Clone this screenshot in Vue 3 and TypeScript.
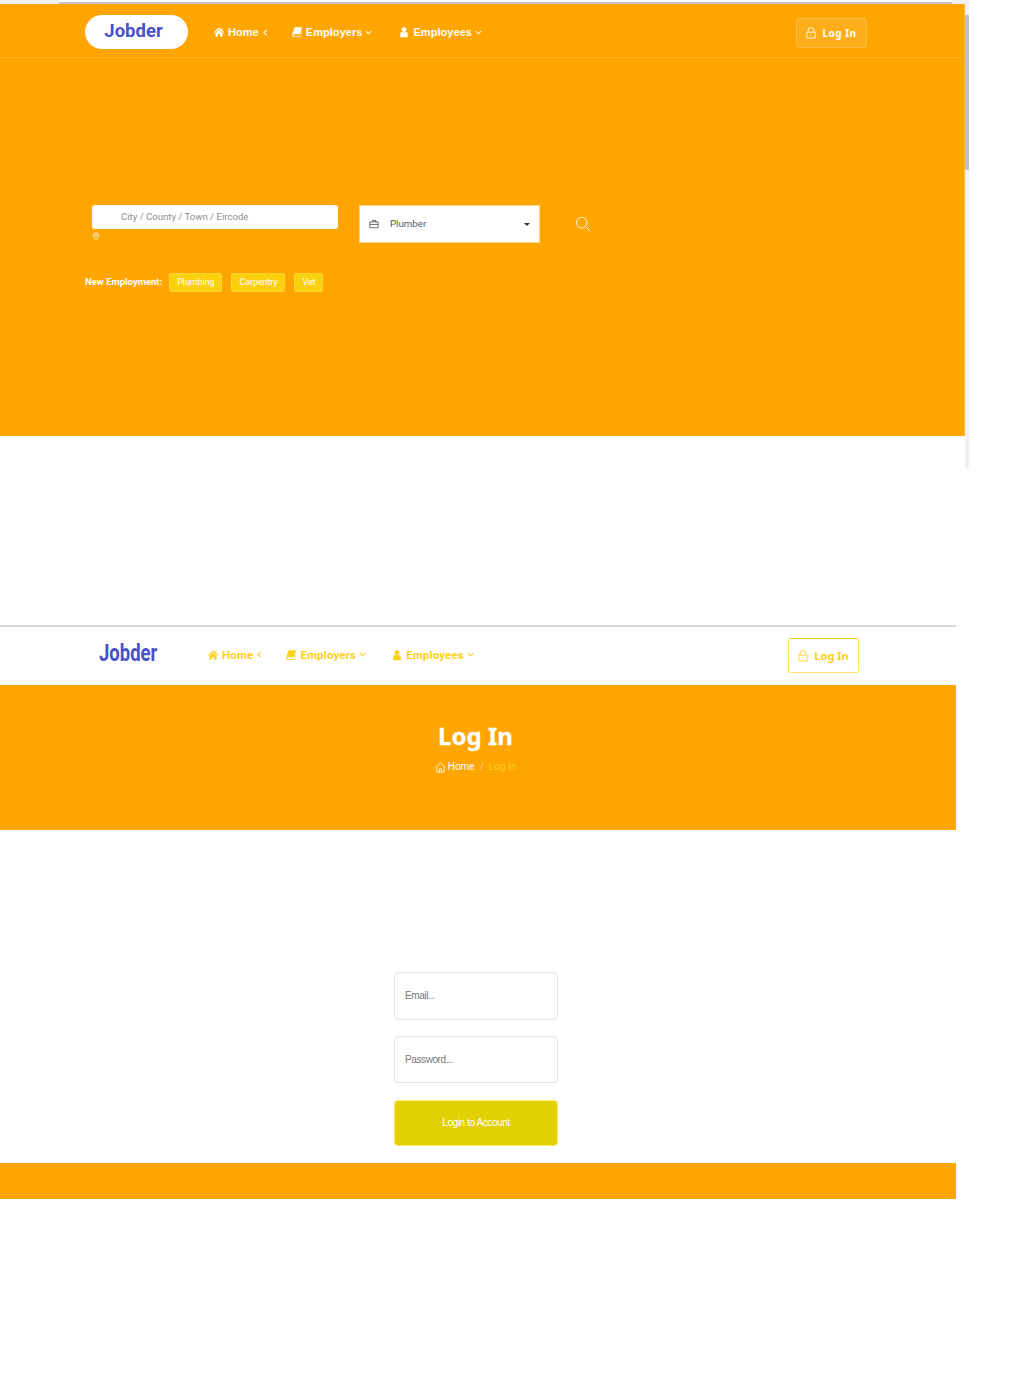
<script setup lang="ts">
interface NavItem { label: string; icon: 'home' | 'book' | 'user'; chevron: 'left' | 'down' }
const nav: NavItem[] = [
  { label: 'Home', icon: 'home', chevron: 'left' },
  { label: 'Employers', icon: 'book', chevron: 'down' },
  { label: 'Employees', icon: 'user', chevron: 'down' },
]
const tags = ['Plumbing', 'Carpentry', 'Vet']
</script>

<template>
  <div class="page">
    <div class="capture">
      <div class="capture-main">
        <div class="chrome"><div class="chrome-bar"></div></div>
        <section class="hero">
          <header class="hero-nav">
            <div class="hero-logo">Jobder</div>
            <nav class="hero-links">
              <a v-for="n in nav" :key="n.label" class="hero-link">
                <svg class="ni" viewBox="0 0 16 16">
                  <path v-if="n.icon === 'home'" d="M8 2 L1 8.2 L2 9.4 L8 4.2 L14 9.4 L15 8.2 L12.6 6.1 V3 H10.8 V4.5 Z M3.2 9.5 V14 H6.6 V10.6 H9.4 V14 H12.8 V9.5 L8 5.4 Z" />
                  <path v-else-if="n.icon === 'book'" d="M4.8 1.5 H14.8 L12.2 11 H4.4 Q3 11 3 12.4 T4.4 13.6 H12.6 L14.8 5.5 L15.2 6 L13 14.6 H3.6 Q1.2 14.6 1.4 12 Z" />
                  <path v-else d="M8 1.5 A3.3 3.3 0 1 1 7.99 1.5 Z M3 15 V11 Q3 8 5.5 7.6 Q8 9.4 10.5 7.6 Q13 8 13 11 V15 Z" />
                </svg>
                <span>{{ n.label }}</span>
                <svg class="chev" viewBox="0 0 8 8">
                  <path v-if="n.chevron === 'left'" d="M5.5 1 L2 4 L5.5 7" />
                  <path v-else d="M1 2.5 L4 5.5 L7 2.5" />
                </svg>
              </a>
            </nav>
            <button class="hero-login">
              <svg class="lock" viewBox="0 0 12 14">
                <path d="M2.5 6 V3.8 a3.5 3.2 0 0 1 7 0 V6 M1 6 H11 V13 H1 Z M6 8.5 V10.5" />
              </svg>
              <span>Log In</span>
            </button>
          </header>

          <div class="search">
            <div class="loc-wrap">
              <div class="loc-input">City / County / Town / Eircode</div>
              <svg class="pin" viewBox="0 0 10 12">
                <path d="M5 1 A3.6 3.6 0 0 1 8.6 4.6 C8.6 7 5 11 5 11 C5 11 1.4 7 1.4 4.6 A3.6 3.6 0 0 1 5 1 Z" />
                <circle cx="5" cy="4.6" r="1.5" />
              </svg>
            </div>
            <div class="job-select">
              <svg class="brief" viewBox="0 0 12 12">
                <path d="M1 3.5 H11 V10.5 H1 Z M4 3.5 V1.8 H8 V3.5 M1 6.5 H11 M6 6 V7" />
              </svg>
              <span class="job-text">Plumber</span>
              <span class="caret"></span>
            </div>
            <svg class="magnifier" viewBox="0 0 18 18">
              <circle cx="7.5" cy="7.5" r="6" />
              <path d="M12 12 L17 17" />
            </svg>
          </div>

          <div class="tags">
            <span class="tags-label">New Employment:</span>
            <span v-for="t in tags" :key="t" class="tag">{{ t }}</span>
          </div>
        </section>
      </div>
      <div class="scrollbar"><div class="thumb"></div></div>
    </div>

    <div class="second">
      <header class="plain-nav">
        <div class="plain-logo">Jobder</div>
        <nav class="plain-links">
          <a v-for="n in nav" :key="n.label" class="plain-link">
            <svg class="ni" viewBox="0 0 16 16">
              <path v-if="n.icon === 'home'" d="M8 2 L1 8.2 L2 9.4 L8 4.2 L14 9.4 L15 8.2 L12.6 6.1 V3 H10.8 V4.5 Z M3.2 9.5 V14 H6.6 V10.6 H9.4 V14 H12.8 V9.5 L8 5.4 Z" />
              <path v-else-if="n.icon === 'book'" d="M4.8 1.5 H14.8 L12.2 11 H4.4 Q3 11 3 12.4 T4.4 13.6 H12.6 L14.8 5.5 L15.2 6 L13 14.6 H3.6 Q1.2 14.6 1.4 12 Z" />
              <path v-else d="M8 1.5 A3.3 3.3 0 1 1 7.99 1.5 Z M3 15 V11 Q3 8 5.5 7.6 Q8 9.4 10.5 7.6 Q13 8 13 11 V15 Z" />
            </svg>
            <span>{{ n.label }}</span>
            <svg class="chev" viewBox="0 0 8 8">
              <path v-if="n.chevron === 'left'" d="M5.5 1 L2 4 L5.5 7" />
              <path v-else d="M1 2.5 L4 5.5 L7 2.5" />
            </svg>
          </a>
        </nav>
        <button class="plain-login">
          <svg class="lock big" viewBox="0 0 12 14">
            <path d="M2.5 6 V3.8 a3.5 3.2 0 0 1 7 0 V6 M1 6 H11 V13 H1 Z M6 8.5 V10.5" />
          </svg>
          <span>Log In</span>
        </button>
      </header>

      <section class="title-band">
        <h1 class="title">Log In</h1>
        <div class="crumbs">
          <svg class="crumb-home" viewBox="0 0 12 12">
            <path d="M6 1 L0.8 5.8 M6 1 L11.2 5.8 M2 5 V11 H10 V5 M4.8 11 V7.5 H7.2 V11" />
          </svg>
          <span>Home</span>
          <span class="sep">/</span>
          <span class="cur">Log In</span>
        </div>
      </section>

      <section class="form-area">
        <form class="form" @submit.prevent>
          <div class="field">Email...</div>
          <div class="field">Password...</div>
          <button class="submit">Login to Account</button>
        </form>
      </section>

      <div class="footer-band"></div>
    </div>
  </div>
</template>

<style>
html, body { margin: 0; background: #fff; }
</style>

<style scoped>
.page { width: 1035px; height: 1400px; overflow: hidden; background: #fff; font-family: "Liberation Sans", Arial, sans-serif; }
.capture { display: flex; width: 969px; height: 468px; }
.capture-main { width: 965px; display: flex; flex-direction: column; }
.chrome { height: 4px; background: #f1f1f1; padding-left: 59px; box-sizing: border-box; }
.chrome-bar { width: 893px; height: 4px; background: #fff; border-bottom: 2px solid #c4c4c4; box-sizing: border-box; }
.hero { height: 432px; background: #ffa500; border-right: 1px solid #ffb52e; box-sizing: border-box; display: flex; flex-direction: column; }
.scrollbar { width: 4px; background: #f1f1f1; padding-top: 15px; box-sizing: border-box; }
.thumb { height: 155px; background: #c1c1c1; }

.hero-nav { height: 54px; box-sizing: border-box; display: flex; align-items: center; padding: 3px 97px 0 85px; border-bottom: 1px solid #ffb21f; }
.hero-logo { width: 103px; height: 34px; box-sizing: border-box; padding-right: 6px; background: #fff; border-radius: 17px; color: #4a50c8; font: 700 18.5px/32px "Roboto", sans-serif; text-align: center; }
.hero-links { display: flex; gap: 22px; margin-left: 25px; flex: 1; }
.hero-link { display: flex; align-items: center; color: #fff; font: 700 11px/14px "Liberation Sans", sans-serif; letter-spacing: 0.05px; }
.hero-link:last-child { margin-left: 4px; }
.ni { width: 12px; height: 12px; fill: currentColor; margin-right: 3px; }
.chev { width: 7px; height: 7px; fill: none; stroke: currentColor; stroke-width: 1.2; margin-left: 3px; }
.hero-login { width: 71px; height: 30px; margin-top: 2px; box-sizing: border-box; display: flex; align-items: center; justify-content: center; gap: 6px; padding: 0; background: rgba(255, 255, 255, 0.1); border: 1px solid rgba(255, 255, 255, 0.2); border-radius: 4px; color: #fff; font: 700 10px/14px "Noto Sans", sans-serif; letter-spacing: 0.5px; }
.lock { width: 10px; height: 12px; fill: none; stroke: currentColor; stroke-width: 1; }
.lock.big { width: 10px; height: 14px; }

.search { display: flex; align-items: flex-start; margin: 147px 0 0 92px; }
.loc-wrap { width: 246px; height: 38px; }
.loc-input { height: 24px; border-radius: 3px; background: #fff; color: #8f8f8f; font: 9.6px/24px "Roboto", sans-serif; padding-left: 29px; box-sizing: border-box; }
.pin { display: block; width: 8px; height: 9px; margin: 3px 0 0 0; fill: none; stroke: #fff; stroke-width: 1; }
.job-select { width: 181px; height: 38px; margin-left: 21px; background: #fff; border: 1px solid #ffd27f; box-sizing: border-box; display: flex; align-items: center; padding: 0 9px; }
.brief { width: 10px; height: 10px; fill: none; stroke: #555; stroke-width: 1; margin-bottom: 1px; }
.job-text { margin-left: 11px; color: #555d66; font: 9.7px/12px "Roboto", sans-serif; flex: 1; }
.caret { width: 0; height: 0; border-left: 3px solid transparent; border-right: 3px solid transparent; border-top: 3px solid #333; }
.magnifier { width: 16px; height: 16px; margin: 11px 0 0 35px; fill: none; stroke: #fff; stroke-width: 1; }

.tags { display: flex; align-items: center; margin: 30px 0 0 85px; }
.tags-label { color: #fff; font: 700 9.5px/12px "Roboto", sans-serif; margin: 0 7px 2px 0; white-space: nowrap; }
.tag { height: 19px; box-sizing: border-box; padding: 0 7px; margin-right: 9px; border: 1px solid #ffd633; border-radius: 2px; background: #fbd00f; color: #fff; font: 9px/17px "Roboto", sans-serif; letter-spacing: -0.1px; }

.second { width: 956px; margin-top: 157px; }
.plain-nav { height: 60px; box-sizing: border-box; border-top: 2px solid #d8d8d8; display: flex; align-items: center; padding: 0 97px 1px 99px; }
.plain-logo { width: 59px; color: #4a50c8; font: 700 24px/28px "Roboto", sans-serif; transform: scaleX(0.77); transform-origin: left center; white-space: nowrap; margin-bottom: 5px; }
.plain-links { display: flex; gap: 22px; margin-left: 49px; flex: 1; margin-bottom: 2px; }
.plain-link { display: flex; align-items: center; color: #ffd019; font: 700 11.5px/14px "Roboto", sans-serif; letter-spacing: 0.15px; }
.plain-link:last-child { margin-left: 3px; }
.plain-login { width: 71px; height: 35px; box-sizing: border-box; display: flex; align-items: center; justify-content: center; gap: 6px; padding: 0; background: #fff; border: 1px solid #ffe270; border-top-color: #ffd019; border-radius: 3px; color: #ffd019; font: 700 11px/14px "Noto Sans", sans-serif; }

.title-band { height: 145px; background: #ffa500; box-sizing: border-box; padding: 34px 5px 0 0; text-align: center; }
.title { margin: 0; color: #fff; font: 700 24px/33px "Noto Sans", sans-serif; -webkit-text-stroke: 0.3px #fff; }
.crumbs { display: flex; align-items: center; justify-content: center; margin-top: 8px; color: #fff; font: 10px/14px "Roboto", sans-serif; }
.crumb-home { width: 11px; height: 11px; fill: none; stroke: #fff; stroke-width: 0.9; margin-right: 2px; }
.sep { margin: 0 5px; color: #ffd27f; }
.cur { color: #ffd019; }

.form-area { height: 333px; box-sizing: border-box; padding-top: 142px; padding-left: 394px; }
.form { width: 164px; display: flex; flex-direction: column; }
.field { height: 48px; box-sizing: border-box; border: 1px solid #e2e2e2; border-radius: 4px; padding-left: 10px; color: #777; font: 10px/46px "Liberation Sans", sans-serif; letter-spacing: -0.4px; margin-bottom: 16px; background: #fff; }
.field + .field { height: 47px; margin-bottom: 17px; line-height: 45px; }
.submit { height: 46px; border: 1px solid #ffe86b; border-radius: 4px; background: #e3cf05; color: #fff; font: 10px/44px "Liberation Sans", sans-serif; letter-spacing: -0.4px; padding: 0; }
.footer-band { height: 36px; background: #ffa500; }
</style>
